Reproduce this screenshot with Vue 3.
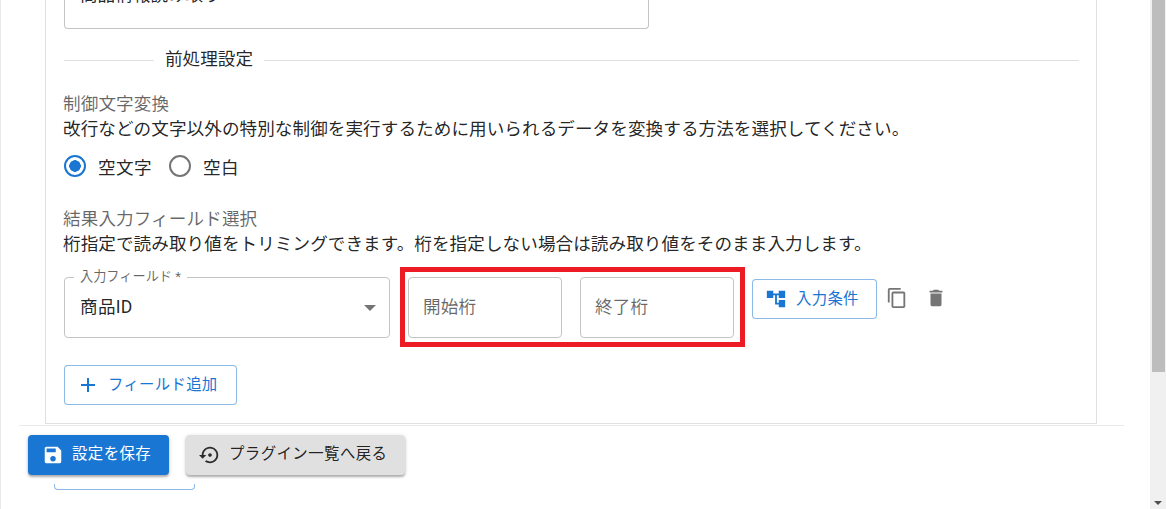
<script setup>
import { ref } from 'vue'

const control = ref('empty')
const controlOptions = [
  { value: 'empty', label: '空文字' },
  { value: 'blank', label: '空白' }
]
</script>

<template>
  <div class="window">
    <div class="page">
      <div class="panel">
        <div class="top-field"><span class="top-value">商品情報読み取り</span></div>

        <div class="divider">
          <span class="divider-line short"></span>
          <span class="divider-text">前処理設定</span>
          <span class="divider-line"></span>
        </div>

        <div class="label first">制御文字変換</div>
        <div class="desc">改行などの文字以外の特別な制御を実行するために用いられるデータを変換する方法を選択してください。</div>

        <div class="radios">
          <label v-for="opt in controlOptions" :key="opt.value" class="radio" @click="control = opt.value">
            <span class="radio-mark" :class="{ on: control === opt.value }"></span>
            <span class="radio-text">{{ opt.label }}</span>
          </label>
        </div>

        <div class="label second">結果入力フィールド選択</div>
        <div class="desc">桁指定で読み取り値をトリミングできます。桁を指定しない場合は読み取り値をそのまま入力します。</div>

        <div class="field-row">
          <div class="select">
            <span class="float-label">入力フィールド *</span>
            <span class="select-value">商品ID</span>
            <span class="arrow"></span>
          </div>
          <div class="highlight">
            <div class="digit">開始桁</div>
            <div class="digit">終了桁</div>
          </div>
          <button class="outline cond">
            <svg class="icon-tree" viewBox="0 0 24 24"><path d="M22 11V3h-7v3H9V3H2v8h7V8h2v10h4v3h7v-8h-7v3h-2V8h2v3z" /></svg>
            入力条件
          </button>
          <svg class="icon-act copy" viewBox="0 0 24 24"><path d="M19,21H8V7H19M19,5H8A2,2 0 0,0 6,7V21A2,2 0 0,0 8,23H19A2,2 0 0,0 21,21V7A2,2 0 0,0 19,5M16,1H4A2,2 0 0,0 2,3V17H4V3H16V1Z" /></svg>
          <svg class="icon-act trash" viewBox="0 0 24 24"><path d="M19,4H15.5L14.5,3H9.5L8.5,4H5V6H19M6,19A2,2 0 0,0 8,21H16A2,2 0 0,0 18,19V7H6V19Z" /></svg>
        </div>

        <button class="outline add">
          <svg class="icon-plus" viewBox="0 0 24 24"><path d="M19,13H13V19H11V13H5V11H11V5H13V11H19V13Z" /></svg>
          フィールド追加
        </button>
      </div>

      <div class="footer">
        <button class="btn save">
          <svg class="icon-btn" viewBox="0 0 24 24"><path d="M15,9H5V5H15M12,19A3,3 0 0,1 9,16A3,3 0 0,1 12,13A3,3 0 0,1 15,16A3,3 0 0,1 12,19M17,3H5C3.89,3 3,3.9 3,5V19A2,2 0 0,0 5,21H19A2,2 0 0,0 21,19V7L17,3Z" /></svg>
          設定を保存
        </button>
        <button class="btn back">
          <svg class="icon-btn" viewBox="0 0 24 24"><path d="M14 12c0-1.1-.9-2-2-2s-2 .9-2 2 .9 2 2 2 2-.9 2-2zm-2-9c-4.97 0-9 4.03-9 9H0l4 4 4-4H5c0-3.87 3.13-7 7-7s7 3.13 7 7-3.13 7-7 7c-1.51 0-2.91-.49-4.06-1.3l-1.42 1.44C8.04 20.3 9.94 21 12 21c4.97 0 9-4.03 9-9s-4.03-9-9-9z" /></svg>
          プラグイン一覧へ戻る
        </button>
      </div>
      <div class="hidden-btn"></div>
    </div>

    <div class="scrollbar">
      <div class="thumb"></div>
      <span class="scroll-down"></span>
    </div>
  </div>
</template>

<style>
html, body {
  margin: 0;
  overflow: hidden;
  background: #fff;
}
</style>

<style scoped>
.window {
  display: flex;
  width: 1166px;
  height: 509px;
  overflow: hidden;
  font-family: Roboto, "Noto Sans CJK JP", sans-serif;
  color: rgba(0, 0, 0, 0.87);
}

.page {
  flex: 1;
  min-width: 0;
  border-left: 1px solid #e8e8e8;
}

.panel {
  width: 1052px;
  height: 424px;
  box-sizing: border-box;
  margin-left: 44px;
  padding: 0 18px;
  border: 1px solid #e0e0e0;
  border-top: 0;
}

.top-field {
  width: 585px;
  height: 29px;
  box-sizing: border-box;
  padding-left: 15px;
  border: 1px solid #c4c4c4;
  border-top: 0;
  border-radius: 0 0 4px 4px;
  overflow: hidden;
}

.top-value {
  display: block;
  margin-top: -18px;
  font-size: 17.6px;
  line-height: 26px;
}

.divider {
  display: flex;
  align-items: center;
  width: 1015px;
  height: 22px;
  margin-top: 19px;
}

.divider-line {
  flex: 1;
  height: 1px;
  margin-top: 3px;
  background: #e0e0e0;
}

.divider-line.short {
  flex: 0 0 90px;
}

.divider-text {
  padding: 0 11px;
  font-size: 17.6px;
  line-height: 22px;
}

.label {
  margin-left: -1px;
  font-size: 17.6px;
  letter-spacing: 0.1px;
  color: rgba(0, 0, 0, 0.6);
}

.label.first {
  margin-top: 21px;
  line-height: 26px;
}

.label.second {
  margin-top: 29px;
  line-height: 25px;
}

.desc {
  margin-left: -1px;
  font-size: 17.6px;
  letter-spacing: 0.06px;
  line-height: 24px;
  white-space: nowrap;
}

.radios {
  display: flex;
  gap: 17px;
  margin-top: 13px;
}

.radio {
  display: flex;
  align-items: center;
  height: 24px;
  gap: 12px;
  cursor: pointer;
}

.radio-mark {
  width: 22px;
  height: 22px;
  box-sizing: border-box;
  border: 2px solid #757575;
  border-radius: 50%;
}

.radio-mark.on {
  border-color: #1976d2;
  background: radial-gradient(circle, #1976d2 0 5.5px, transparent 6px);
}

.radio-text {
  font-size: 17.6px;
  letter-spacing: 0.4px;
}

.field-row {
  display: flex;
  align-items: flex-start;
  margin-top: 11px;
}

.select {
  position: relative;
  display: flex;
  align-items: center;
  justify-content: space-between;
  width: 326px;
  height: 61px;
  box-sizing: border-box;
  margin-top: 10px;
  padding: 0 15px;
  border: 1px solid #c4c4c4;
  border-radius: 4px;
}

.float-label {
  position: absolute;
  top: -9px;
  left: 9px;
  padding: 0 6px;
  background: #fff;
  font-size: 13.2px;
  line-height: 16px;
  color: rgba(0, 0, 0, 0.6);
}

.select-value {
  font-size: 17.6px;
  letter-spacing: 0.3px;
  margin-top: -5px;
}

.arrow {
  width: 0;
  height: 0;
  margin-right: -2px;
  border-left: 6px solid transparent;
  border-right: 6px solid transparent;
  border-top: 6px solid #757575;
}

.highlight {
  display: flex;
  gap: 18px;
  margin-left: 10px;
  padding: 5px 6px 4px 3px;
  border: 5px solid #ed1c24;
}

.digit {
  display: flex;
  align-items: center;
  width: 154px;
  height: 61px;
  box-sizing: border-box;
  padding-left: 14px;
  padding-bottom: 5px;
  border: 1px solid #c4c4c4;
  border-radius: 4px;
  font-size: 17.6px;
  letter-spacing: 0.2px;
  color: rgba(0, 0, 0, 0.6);
}

.outline {
  display: flex;
  align-items: center;
  height: 40px;
  box-sizing: border-box;
  border: 1px solid rgba(25, 118, 210, 0.5);
  border-radius: 4px;
  background: #fff;
  color: #1976d2;
  font-family: inherit;
  font-size: 15.4px;
  letter-spacing: 0.3px;
}

.cond {
  width: 125px;
  margin-top: 12px;
  margin-left: 7px;
  padding: 0 0 5px 12px;
}

.icon-tree {
  width: 22px;
  height: 22px;
  margin-top: 5px;
  margin-right: 9px;
  fill: #1976d2;
}

.icon-act {
  width: 22px;
  height: 22px;
  margin-top: 20px;
  fill: #757575;
}

.copy {
  margin-left: 9px;
}

.trash {
  margin-left: 17px;
}

.add {
  width: 173px;
  margin-top: 18px;
  padding: 0 0 5px 11px;
}

.icon-plus {
  width: 24px;
  height: 24px;
  margin-top: 5px;
  margin-right: 8px;
  fill: #1976d2;
}

.footer {
  display: flex;
  gap: 17px;
  width: 1105px;
  height: 50px;
  box-sizing: border-box;
  margin-left: 18px;
  margin-top: 1px;
  padding: 9px 0 0 9px;
  border-top: 1px solid #eaeaea;
}

.btn {
  display: flex;
  align-items: center;
  height: 40px;
  border: 0;
  border-radius: 4px;
  font-family: inherit;
  font-size: 15.4px;
  letter-spacing: 0.45px;
  box-shadow: 0 2px 2px rgba(0, 0, 0, 0.24), 0 1px 4px rgba(0, 0, 0, 0.16);
}

.save {
  width: 141px;
  padding: 0 0 6px 14px;
  background: #1976d2;
  color: #fff;
}

.save .icon-btn {
  fill: #fff;
}

.back {
  width: 219px;
  padding: 0 0 6px 13px;
  background: #e0e0e0;
  color: rgba(0, 0, 0, 0.87);
}

.back .icon-btn {
  fill: rgba(0, 0, 0, 0.8);
}

.icon-btn {
  width: 22px;
  height: 22px;
  margin-top: 6px;
  margin-right: 8px;
}

.hidden-btn {
  width: 141px;
  height: 6px;
  box-sizing: border-box;
  margin-left: 53px;
  margin-top: 9px;
  border: 1px solid rgba(25, 118, 210, 0.5);
  border-top: 0;
  border-radius: 0 0 4px 4px;
}

.scrollbar {
  position: relative;
  flex: 0 0 16px;
  background: #f0f0f0;
}

.thumb {
  width: 13px;
  height: 372px;
  margin-left: 2px;
  background: #bdbdbd;
}

.scroll-down {
  position: absolute;
  left: 4px;
  bottom: 4px;
  width: 0;
  height: 0;
  border-left: 4px solid transparent;
  border-right: 4px solid transparent;
  border-top: 4px solid #505050;
}
</style>
